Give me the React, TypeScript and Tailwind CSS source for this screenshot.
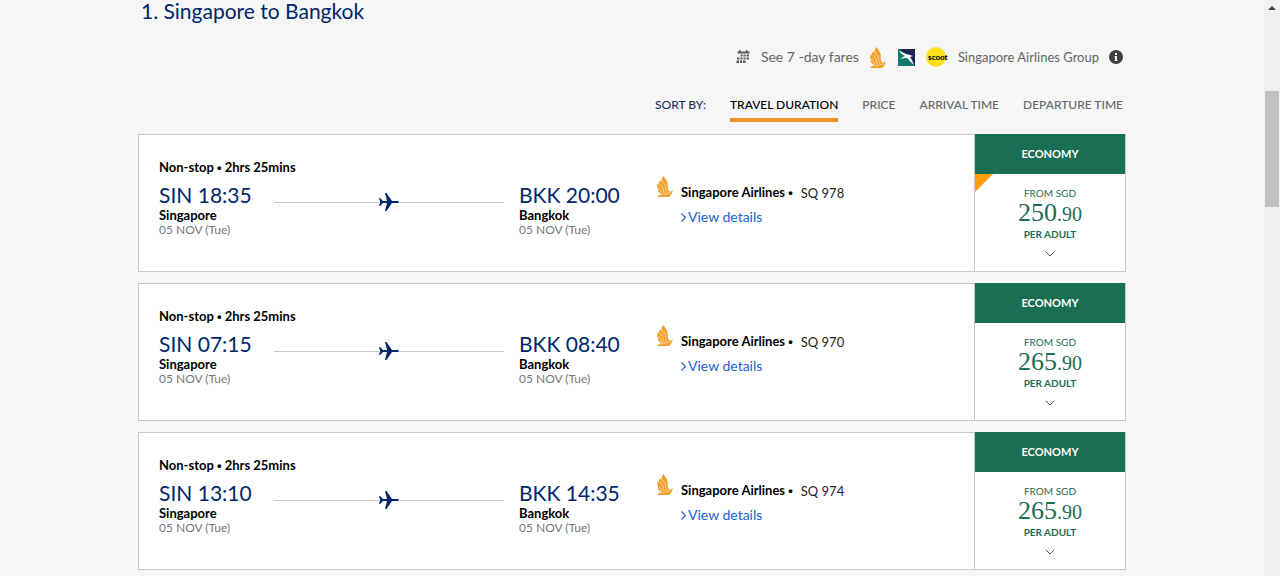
import React from 'react';
import { ChevronDown } from 'lucide-react';

interface Flight {
  number: string;
  departs: string;
  arrives: string;
  dollars: string;
  cents: string;
  lowest?: boolean;
}

const flights: Flight[] = [
  { number: 'SQ 978', departs: '18:35', arrives: '20:00', dollars: '250', cents: '.90', lowest: true },
  { number: 'SQ 970', departs: '07:15', arrives: '08:40', dollars: '265', cents: '.90' },
  { number: 'SQ 974', departs: '13:10', arrives: '14:35', dollars: '265', cents: '.90' },
];

const sortOptions = ['TRAVEL DURATION', 'PRICE', 'ARRIVAL TIME', 'DEPARTURE TIME'];

function BirdLogo({ className = '' }: { className?: string }) {
  return (
    <svg viewBox="0 0 32 42" className={`h-[21px] w-4 shrink-0 ${className}`} aria-hidden="true">
      <path
        fill="#f2a02c"
        d="M13 0l7 11c2 4 1 8 2 16l2 4c3 0 6-1 8-3-1 6-4 10-8 14H0l8-7c-5-2-7-5-6-9C0 22 0 19 1 15l3 2c-1-3 0-5 2-8l3 2c0-4 1-8 4-11z"
      />
      <path
        fill="none"
        stroke="#fdf0d8"
        strokeWidth="1.2"
        d="M10 10l6 8c2 4 0 10 4 15M6 16l5 6c2 4 1 8 4 12M3 24l5 6 2 5M6 38c5-2 9-1 13-2 4-1 7-2 10-5"
      />
    </svg>
  );
}

function SilkAirLogo() {
  return (
    <svg viewBox="0 0 17 17" className="h-[17px] w-[17px] shrink-0" aria-hidden="true">
      <path fill="#117a70" d="M0 0h17v17H0z" />
      <path fill="#1b2452" d="M2 0h15v17z" />
      <path fill="#fff" d="M1 2c3 1 5 2 7 3l4 1 3 1-3 1c2 3 3 5 4 8-3-3-5-5-7-7-3 0-5 0-7 1 1-1 3-2 5-3C4 5 2 4 1 2z" />
    </svg>
  );
}

function ScootLogo() {
  return (
    <span className="flex h-5 w-[22px] shrink-0 items-center">
      <span className="flex h-5 w-5 shrink-0 items-center justify-center rounded-full bg-[#fbe01e] pl-1 text-[8px] leading-none font-black text-black">
        scoot
      </span>
    </span>
  );
}

function CalendarIcon() {
  return (
    <svg viewBox="0 0 28 28" className="h-3.5 w-3.5 shrink-0" fill="#5a5a5a" aria-hidden="true">
      <path d="M3 3h3V0h3v3h11V0h3v3h4v4H3zM9 9h4v4H9zM15 9h4v4h-4zM21 9h5v4h-5zM2 15h5v4H2zM9 15h4v4H9zM15 15h4v4h-4zM21 15h5v4h-5zM1 21h5v5H1zM8 21h4v5H8zM14 21h5v5h-5z" />
    </svg>
  );
}

function InfoIcon() {
  return (
    <svg viewBox="0 0 14 14" className="h-3.5 w-3.5" aria-hidden="true">
      <circle cx="7" cy="7" r="7" fill="#404040" />
      <path fill="#f6f6f6" d="M6 3h2v2H6zM5.500 6H8v4h.6v1H5.500v-1H6V7h-.5z" />
    </svg>
  );
}

function PlaneIcon() {
  return (
    <svg viewBox="0 0 20 20" className="h-5 w-5" fill="#00266b" aria-hidden="true">
      <path d="M0 6h1l3 3h4L6 1h1.500L13 8.900h4.500c3.300 0 3.300 2.200 0 2.200H13L7.500 19H6l2-8H4l-3 3H0l1.200-4z" />
    </svg>
  );
}

function Airport({ code, time, city }: { code: string; time: string; city: string }) {
  return (
    <div>
      <p className="text-[21px] leading-[26px] text-[#00266b]">
        {code} {time}
      </p>
      <p className="text-[13px] leading-3.5 font-bold text-black">{city}</p>
      <p className="text-xs leading-4 text-[#777]">05 NOV (Tue)</p>
    </div>
  );
}

function FlightCard({ flight }: { flight: Flight }) {
  return (
    <li className="flex border border-[#c6c8ca] bg-white">
      <div className="flex-1 px-5 pt-[22px] pb-[33px]">
        <p className="text-[13px] leading-5 font-bold text-black">
          Non-stop <span className="font-['Liberation_Sans']">•</span> 2hrs 25mins
        </p>
        <div className="mt-1 flex">
          <div className="w-[115px] shrink-0">
            <Airport code="SIN" time={flight.departs} city="Singapore" />
          </div>
          <div className="mt-2.5 flex h-5 w-[230px] shrink-0 items-center">
            <span className="h-px w-[105px] bg-[#c6c8ca]" />
            <PlaneIcon />
            <span className="h-px flex-1 bg-[#c6c8ca]" />
          </div>
          <div className="ml-[15px] w-[138px] shrink-0">
            <Airport code="BKK" time={flight.arrives} city="Bangkok" />
          </div>
          <div className="flex gap-2">
            <BirdLogo className="-mt-1.5" />
            <div>
              <p className="flex items-center gap-2 text-[13px] leading-5 text-[#222]">
                <span className="font-bold text-black">
                  Singapore Airlines <span className="font-['Liberation_Sans']">•</span>
                </span>
                <span>{flight.number}</span>
              </p>
              <a href="#" className="mt-1 flex items-center gap-0.5 text-sm leading-5 text-[#2063c9]">
                <svg viewBox="0 0 5 9" className="h-[9px] w-[5px]" aria-hidden="true">
                  <path fill="none" stroke="currentColor" strokeWidth="1.2" d="M.5.5l4 4-4 4" />
                </svg>
                View details
              </a>
            </div>
          </div>
        </div>
      </div>
      <button className="relative -mt-px flex w-[151px] shrink-0 flex-col border-l border-[#c6c8ca] text-[#1a6e54]">
        <span className="flex h-10 items-center justify-center self-stretch bg-[#1a6e54] text-[11px] font-bold text-white">
          ECONOMY
        </span>
        {flight.lowest && (
          <svg viewBox="0 0 18 18" className="absolute top-10 left-0 h-[18px] w-[18px]" aria-hidden="true">
            <path fill="#ff9e0b" d="M0 0h18L0 18z" />
          </svg>
        )}
        <span className="mt-[11px] self-center text-[10px] leading-4">FROM SGD</span>
        <span className="self-center font-['Liberation_Serif'] text-[26px] leading-6">
          {flight.dollars}
          <span className="text-[20px]">{flight.cents}</span>
        </span>
        <span className="self-center text-[10px] leading-4 font-bold">PER ADULT</span>
        <ChevronDown className="mt-1 h-4 w-4 self-center text-[#555]" strokeWidth={1.5} />
      </button>
    </li>
  );
}

function Scrollbar() {
  return (
    <div className="w-4 shrink-0 bg-[#f0f0f0]" aria-hidden="true">
      <svg viewBox="0 0 16 16" className="h-4 w-4" fill="#404040">
        <path d="M4 10l4-4 4 4z" />
      </svg>
      <div className="mx-auto mt-[75px] h-[116px] w-3.5 bg-[#c1c1c1]" />
    </div>
  );
}

export default function App() {
  return (
    <div className="flex h-screen overflow-hidden bg-[#f6f6f6] font-['Lato',sans-serif]">
      <main className="min-w-0 flex-1">
        <div className="mx-auto w-full max-w-[988px]">
          <h1 className="pl-[3px] text-[21px] leading-[22px] text-[#00266b]">1. Singapore to Bangkok</h1>

          <div className="mt-6 flex h-[22px] items-center justify-end pr-[3px] text-sm text-[#666]">
            <CalendarIcon />
            <a href="#" className="mx-[11px]">See 7 -day fares</a>
            <BirdLogo className="mr-3" />
            <SilkAirLogo />
            <span className="mr-2.5 ml-[11px]">
              <ScootLogo />
            </span>
            <span className="mr-2.5 text-[13px]">Singapore Airlines Group</span>
            <button aria-label="About Singapore Airlines Group">
              <InfoIcon />
            </button>
          </div>

          <div className="mt-[27px] flex justify-end gap-6 pr-[3px] text-xs leading-5 font-medium">
            <span className="text-[#1b2f5e]">SORT BY:</span>
            {sortOptions.map((option, index) => (
              <button
                key={option}
                className={`h-[27px] border-b-4 pb-[3px] ${
                  index === 0 ? 'border-[#ec9430] text-black' : 'border-transparent text-[#666]'
                }`}
              >
                {option}
              </button>
            ))}
          </div>

          <ul className="mt-3 flex flex-col gap-[11px]">
            {flights.map((flight) => (
              <FlightCard key={flight.number} flight={flight} />
            ))}
          </ul>
        </div>
      </main>
      <Scrollbar />
    </div>
  );
}
